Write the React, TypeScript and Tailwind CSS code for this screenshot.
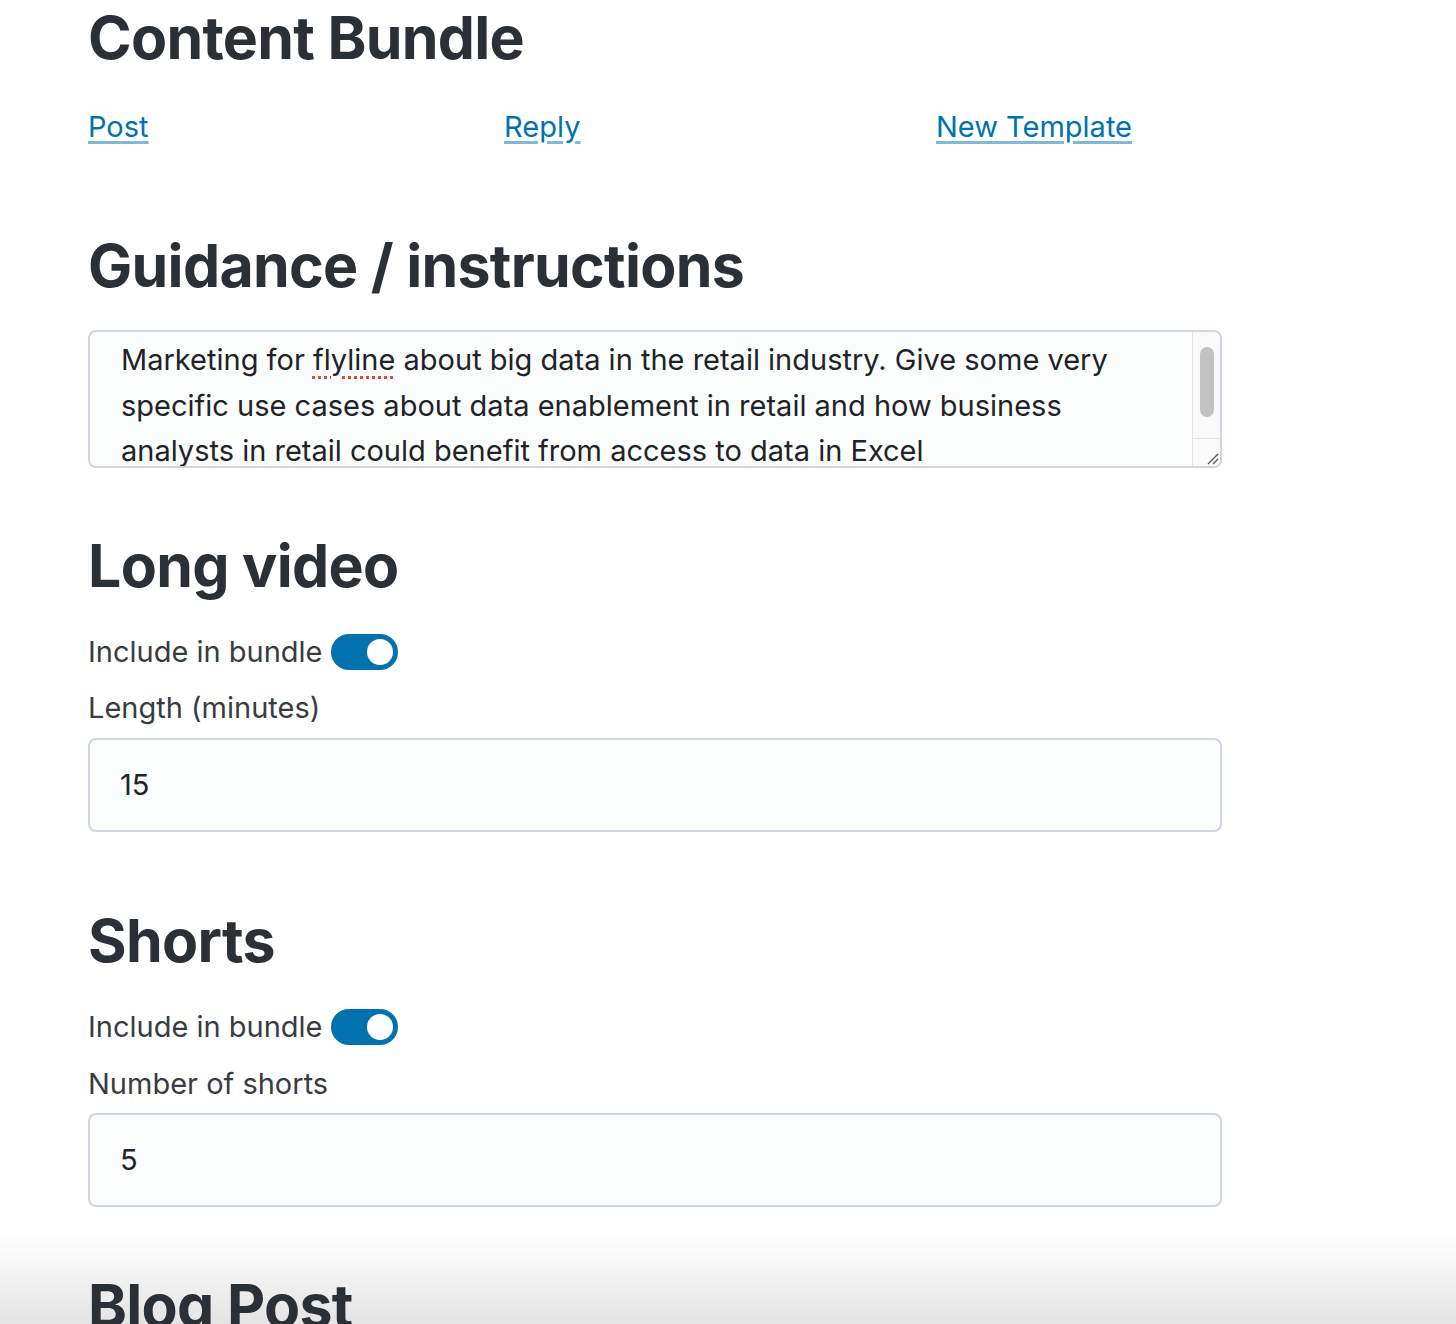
import React from "react";

const Toggle = () => (
  <span className="ml-2 inline-flex h-[36px] w-[67px] items-center justify-end rounded-full bg-[#0172ad] pr-[5px]">
    <span className="h-[26px] w-[26px] rounded-full bg-white" />
  </span>
);

const Heading = ({ children, className = "" }: { children: React.ReactNode; className?: string }) => (
  <h2 className={`text-[59px] font-bold leading-[72px] tracking-[-0.7px] text-[#2b2f36] ${className}`}>
    {children}
  </h2>
);

const NumberField = ({ value, className = "" }: { value: string; className?: string }) => (
  <div
    className={`flex h-[94px] w-[1134px] items-center rounded-[8px] border-2 border-[#cfd5e2] bg-[#fbfcfc] pl-[30px] text-[29px] text-[#1f2328] ${className}`}
  >
    {value}
  </div>
);

export default function App() {
  return (
    <div
      className="relative h-[1324px] overflow-hidden bg-white"
      style={{ fontFamily: "Inter, 'Noto Sans', sans-serif" }}
    >
      {/* bottom shading sits behind the content */}
      <div className="pointer-events-none absolute inset-x-0 bottom-0 h-[90px] bg-linear-to-b from-white/0 to-[#e4e4e4]" />

      <div className="relative pl-[88px]">
        <h1 className="mt-[2px] text-[59px] font-bold leading-[72px] tracking-[-0.7px] text-[#2b2f36]">
          Content Bundle
        </h1>

        <nav className="mt-[30px] flex w-[1044px] justify-between text-[29px] leading-[45px] text-[#0172ad]">
          {["Post", "Reply", "New Template"].map((l) => (
            <a
              key={l}
              href="#"
              className="underline decoration-[#0172ad]/50 decoration-[3px] underline-offset-[4px]"
            >
              {l}
            </a>
          ))}
        </nav>

        <Heading className="mt-[81px]">Guidance / instructions</Heading>

        <div className="relative mt-[28px] flex h-[138px] w-[1134px] overflow-hidden rounded-[8px] border-2 border-[#cfd5e2] bg-[#fbfcfc]">
          <p className="flex-1 pl-[31px] pt-[5px] text-[29px] leading-[45.5px] text-[#1f2328]">
            Marketing for{" "}
            <span className="underline decoration-[#e0443e] decoration-dotted decoration-[3px] underline-offset-[6px]">
              flyline
            </span>{" "}
            about big data in the retail industry. Give some very
            <br />
            specific use cases about data enablement in retail and how business
            <br />
            analysts in retail could benefit from access to data in Excel
          </p>
          <div className="flex w-[28px] flex-col border-l border-[#e4e4e4] bg-[#f9f9f9]">
            <div className="flex flex-1 justify-center pt-[15px]">
              <div className="h-[70px] w-[14px] rounded-full bg-[#c2c2c2]" />
            </div>
            <div className="flex h-[28px] items-end justify-end border-t border-[#e4e4e4] pb-[1px] pr-[1px]">
              <svg width="14" height="14" viewBox="0 0 14 14">
                <path d="M13 3L3 13M13 8L8 13" stroke="#555" strokeWidth="1.3" fill="none" />
              </svg>
            </div>
          </div>
        </div>

        <Heading className="mt-[62px]">Long video</Heading>
        <div className="mt-[28px] flex h-[44px] items-center text-[29px] text-[#373c44]">
          Include in bundle
          <Toggle />
        </div>
        <div className="mt-[12px] h-[44px] text-[29px] leading-[44px] text-[#373c44]">Length (minutes)</div>
        <NumberField value="15" className="mt-[8px]" />

        <Heading className="mt-[73px]">Shorts</Heading>
        <div className="mt-[28px] flex h-[44px] items-center text-[29px] text-[#373c44]">
          Include in bundle
          <Toggle />
        </div>
        <div className="mt-[13px] h-[44px] text-[29px] leading-[44px] text-[#373c44]">Number of shorts</div>
        <NumberField value="5" className="mt-[7px]" />

        <Heading className="mt-[63px]">Blog Post</Heading>
      </div>
    </div>
  );
}
